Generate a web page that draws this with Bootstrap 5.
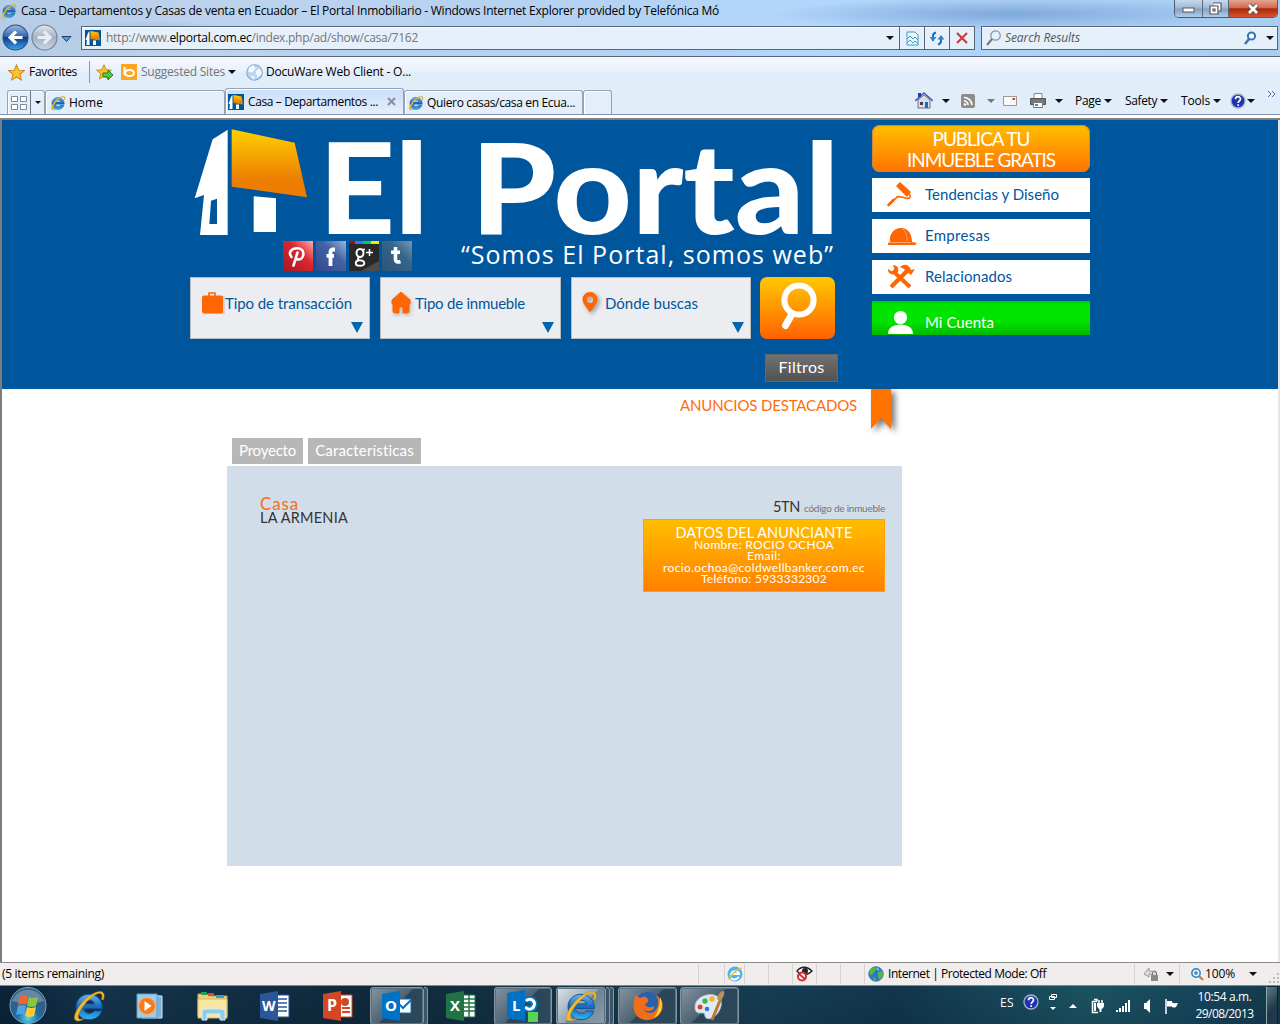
<!DOCTYPE html>
<html lang="es">
<head>
<meta charset="utf-8">
<title>Casa – Departamentos y Casas de venta en Ecuador – El Portal Inmobiliario</title>
<link href="https://cdn.jsdelivr.net/npm/bootstrap@5.3.0/dist/css/bootstrap.min.css" rel="stylesheet">
<style>
body{width:1280px;height:1024px;overflow:hidden;font:12px/16px "Open Sans","Noto Sans",sans-serif;color:#000;background:#fff}
svg{display:block;flex:none}
[data-w]{display:inline-block;white-space:nowrap}
.sl{flex:none;display:flex;align-items:center;justify-content:center}
.w14{width:14px}.w20{width:20px}.w24{width:24px}.w26{width:26px}
.car{width:0;height:0;border:4px solid transparent;border-top-color:#111;border-bottom:0;flex:none}
.glass{height:56px;background:radial-gradient(ellipse 90px 14px at 150px 34px,#a2b6d2 0,transparent 100%),radial-gradient(ellipse 240px 16px at 1010px 14px,#7fa9da 0,transparent 100%),linear-gradient(90deg,#b5cce6 0,#bdd2ec 16%,#b4d2f3 45%,#b2d6fc 65%,#a8cdf3 100%)}
.ttl{height:22px;padding-left:1px}
.winbtns{width:104px;height:18px;border:1px solid #4b5b70;border-top:0;border-radius:0 0 5px 5px;overflow:hidden;margin-right:2px}
.winbtns div{background:linear-gradient(#c8d9ec,#9fb8d3 48%,#84a1c0 52%,#b4cde6);border-right:1px solid #5a6a7f}
.winbtns .cls{background:linear-gradient(#e5a591,#cf6a50 46%,#ad2508 52%,#d5552e);border:0}
.navr{height:34px;padding-left:2px;padding-top:4px}
.orb{width:27px;height:27px;margin-top:-2px}
.fld{height:24px;background:#e6f0fa;border:1px solid #55667c;box-shadow:inset 0 1px #fff}
.fld .cell{width:25px;height:22px;border-left:1px solid #55667c}
.gry{color:#757575}
.favs{height:33px;border-top:1px solid #58667a;background:linear-gradient(#f5f8fe,#eaf1fb 14px,#e1edf9 15px);padding:0 0 2px 8px}
.tabsr{height:26px;background:#e1edf9;border-bottom:1px solid #8795a6;padding-left:7px}
.tb{height:24px;border:1px solid #96a3b3;border-bottom:0;border-radius:3px 3px 0 0;background:#e3eefa;box-shadow:inset 1px 1px #fff}
.tb.on{height:26px;background:linear-gradient(#c8defa,#e6effa)}
.edge{height:5px;background:linear-gradient(#fff 3px,#8c8c8c 3px,#777)}
.view{height:842px;border-left:2px solid #7d7d7d;border-right:2px solid #e6e6e6;background:#fff;font-family:Lato,"Open Sans",sans-serif}
.hero{height:269px;background:#00569d;padding-left:188px}
.maincol{width:650px}
.soc{width:30px;height:30px;margin-right:3px}
.tagl{font:400 25px/26px "Open Sans",Lato,sans-serif;color:#fff}
.sel{width:181px;height:62px;background:#ecedf0;border:1px solid #b9bbbf;color:#00569d;font-size:15px;padding:0 0 9px 10px}
.sel span{margin-top:-2px}
.sel .car{border-width:11px 6.5px 0;border-top-color:#0066ae;right:6px;bottom:5px}
.go{width:75px;height:62px;border-radius:7px;background:linear-gradient(#ffc800,#ff9600 50%,#ff6100)}
.filt{width:73px;height:28px;border:1px solid #666;background:linear-gradient(#727272,#515151);color:#fff;font-size:16px;margin-top:15px;margin-left:575px;padding-bottom:2px}
.side{width:218px;margin-left:32px;padding-top:5px}
.pub{height:47px;border-radius:8px;background:linear-gradient(#ffbe00,#ff7300);box-shadow:inset 0 0 0 1px #c98a3c;color:#fff;font-size:19px;line-height:21px;margin-bottom:6px;padding-top:3px}
.lnk{height:34px;background:#fff;color:#00569d;font-size:15px;margin-bottom:7px;padding-left:12px}
.lnk svg{margin-right:7px}
.lnk span{margin-top:-2px}
.lnk.me{background:linear-gradient(#00c400,#00e400 3px,#00e400 60%,#00b800);color:#fff}
.orange{color:#ff6c0a}
.dest{height:49px;padding-left:678px}
.ptab{background:#b7b7b7;color:#fff;font-size:15px;height:26px;padding-bottom:2px}
.pane{width:675px;height:400px;margin-left:225px;margin-top:2px;background:#d2ddea;padding:31px 17px 0 33px}
.adv{width:242px;height:73px;border:1px solid #ffa000;background:linear-gradient(#ffbe00,#ff8000);color:#fff;font-size:12px;line-height:11.4px;padding-top:6px}
.stat{height:23px;border-top:1px solid #8a8a8a;background:#f0edec}
.stat .cell{height:20px;border-left:1px solid #d6d3d2;flex:none}
.task{height:40px;border-top:1px solid #7a8b95;background:linear-gradient(transparent,rgba(0,20,40,.15)),linear-gradient(90deg,#0b2338 0,#14344b 8%,#10293c 28%,#173d52 60%,#12364c 70%,#1b5361 85%,#17455a 94%,#143a4c);color:#fff}
.app{height:38px;border:1px solid #8795a0;border-radius:3px;background:linear-gradient(135deg,#8794a0 0,#4c6272 48%,#2b4557 50%,#2c4a5c);box-shadow:inset 0 0 0 1px #5c7180}
.app.act{background:linear-gradient(135deg,#dde4ea,#93a5b2 50%,#6d8494 52%,#8ba0ae)}
.stk{width:4px;height:38px;border:1px solid #8795a0;border-left:0;border-radius:0 3px 3px 0;background:#3c5566}
</style>
<script src="https://cdn.jsdelivr.net/npm/bootstrap@5.3.0/dist/js/bootstrap.bundle.min.js"></script>
</head>
<body>
<svg width="0" height="0" class="position-absolute" aria-hidden="true">
<defs>
<linearGradient id="gOr" x2="0" y2="1"><stop stop-color="#ffd000"/><stop offset=".75" stop-color="#ec7d00"/><stop offset="1" stop-color="#ec7d00"/></linearGradient>
<linearGradient id="gBl" x2="0" y2="1"><stop stop-color="#6fb4ec"/><stop offset=".5" stop-color="#1668b8"/><stop offset="1" stop-color="#35b5f0"/></linearGradient>
<linearGradient id="gNav" x2="0" y2="1"><stop stop-color="#9dbbe6"/><stop offset=".48" stop-color="#2d62ae"/><stop offset=".5" stop-color="#0c3b8c"/><stop offset="1" stop-color="#37a5ee"/></linearGradient>
<linearGradient id="gGr" x2="0" y2="1"><stop stop-color="#dfe6ee"/><stop offset=".5" stop-color="#a3b2c4"/><stop offset="1" stop-color="#c8d6e6"/></linearGradient>
<symbol id="ie" viewBox="0 0 32 32"><path d="M28.500 18.500H11c.3 2.800 2.400 4.300 5.200 4.300 2.200 0 3.700-.9 4.700-2.200h7c-1.500 5.100-6 8.200-11.800 8.200C8.700 28.800 3.800 23.800 3.800 17 3.800 10.200 8.700 5 16 5s12.800 5.200 12.500 13.500zM11 14h10c-.4-2.200-2.300-3.500-4.900-3.500S11.600 11.800 11 14z" fill="url(#gBl)" stroke="#0f4f94" stroke-width=".9"/><path d="M29.500 10c1.500-4 .8-7-2-7.500C23.200 1.800 15.500 6 9.500 13 3.600 20 .6 27.300 3.600 29.500c1.800 1.300 4.900.4 8.400-1.900-2.800 1.100-4.900 1.200-5.700.1C4.600 25.300 8 18.700 13.200 12.800 18.600 6.800 24.800 3 27.300 4.400c1.300.8 1.400 2.900.5 5.600z" fill="#f5bd2b" stroke="#c68c12" stroke-width=".5"/></symbol>
<symbol id="port" viewBox="0 0 16 16"><path fill="#00569d" d="M0 0h16v16H0z"/><path fill="#fff" d="M4.500 1V15H1.500l.3-5H.5L3 3zM8 10.500h3V15H8z"/><path fill="url(#gOr)" d="M5.500 1l8 1.500 1.500 8-9.500-1.500z"/></symbol>
<symbol id="star" viewBox="0 0 16 16"><path d="M8 .8l2.100 5 5.300.4-4.100 3.500 1.300 5.300L8 12.200 3.400 15l1.300-5.300L.6 6.200l5.300-.4z" fill="#fcc42c" stroke="#d08a1c"/></symbol>
<symbol id="help" viewBox="0 0 16 16"><circle cx="8" cy="8" r="7" fill="#1c34b4" stroke="#a9b4c8" stroke-width="1.300"/><path d="M5.500 6.300c0-3.500 5-3.300 5-.3 0 2-2.300 1.800-2.300 4M8.200 11.300v1.700" fill="none" stroke="#fff" stroke-width="1.700"/></symbol>
<symbol id="globe" viewBox="0 0 16 16"><circle cx="8" cy="8" r="7.300" fill="#2778c8" stroke="#5b88b8"/><path d="M2 4c3-4 6-3 7-1.500L7 5 5 8 2 9zM10 6l4-1 1 4-3 5-2-3zM4 11l4 1-1 3z" fill="#55b948"/><path d="M9 2l2 1-1 2z" fill="#cfe8ff"/></symbol>
</defs></svg>

<div class="glass">
 <div class="ttl d-flex align-items-center">
  <svg width="16" height="16"><use href="#ie"/></svg><span data-w="698" class="ms-1">Casa – Departamentos y Casas de venta en Ecuador – El Portal Inmobiliario - Windows Internet Explorer provided by Telefónica Mó</span>
  <div class="winbtns ms-auto d-flex align-self-start">
   <div class="sl" style="width:28px"><svg width="14" height="8"><rect x="1" y="3" width="11" height="4" fill="#fff" stroke="#556"/></svg></div>
   <div class="sl w26"><svg width="13" height="13"><path d="M4 1h8v8h-2M1 4h8v8H1zM4 7h2v2H4z" fill="#fff" stroke="#556" stroke-width="1.200"/></svg></div>
   <div class="cls sl flex-fill"><svg width="13" height="12"><path d="M2 2l8 8m0-8l-8 8" stroke="#555" stroke-width="4.500"/><path d="M2 2l8 8m0-8l-8 8" stroke="#fff" stroke-width="2.600"/></svg></div>
  </div>
 </div>
 <div class="navr d-flex">
  <svg class="orb" viewBox="0 0 25 25"><circle cx="12.500" cy="12.500" r="11.600" fill="url(#gNav)" stroke="#334d77"/><path d="M19 12.500H8m5-5.500l-5.500 5.500 5.500 5.500" fill="none" stroke="#fff" stroke-width="3"/></svg>
  <svg class="orb" viewBox="0 0 25 25" style="margin-left:2px"><circle cx="12.500" cy="12.500" r="11.600" fill="url(#gGr)" stroke="#6f8095"/><path d="M6 12.500H17m-5-5.500l5.500 5.500-5.500 5.500" fill="none" stroke="#e8eef5" stroke-width="3"/></svg>
  <svg width="23" height="24"><path d="M4 10.500h9l-4.500 5z" fill="#5b9bd8" stroke="#173c72"/></svg>
  <div class="fld d-flex align-items-center" style="width:894px">
   <svg width="16" height="16" style="margin-left:3px"><use href="#port"/></svg>
   <span data-w="312" class="gry" style="margin-left:5px">http://www.<span class="text-black">elportal.com.ec</span>/index.php/ad/show/casa/7162</span>
   <i class="car ms-auto"></i>
   <div class="cell sl" style="margin-left:5px"><svg width="13" height="15"><path d="M1 1h8l3 3v10H1zM1 8l3-3 3 3 2-2 3 3M1 12l3-3 3 3 2-2 3 3" fill="#eef8fe" stroke="#3b9ccc"/></svg></div>
   <div class="cell sl"><svg width="16" height="15"><path d="M4 10V5c0-2 1-3 3-3.500M12 5v5c0 2-1 3-3 3.500" fill="none" stroke="#1f6db5" stroke-width="2"/><path d="M.5 6h7L4 10.500zM8.500 8.500h7L12 4z" fill="#2a86cc"/></svg></div>
   <div class="cell sl"><svg width="12" height="12"><path d="M1 1l10 10M11 1L1 11" stroke="#cf3b3b" stroke-width="2.200"/></svg></div>
  </div>
  <div class="fld d-flex align-items-center flex-fill px-1" style="margin:0 2px 0 6px">
   <svg width="16" height="16"><circle cx="9.500" cy="5.500" r="4.700" fill="#e3f2fc" stroke="#8595a5" stroke-width="1.300"/><path d="M6 9l-5 6" stroke="#777" stroke-width="2"/></svg>
   <i data-w="75" style="margin-left:3px;color:#555">Search Results</i>
   <svg width="14" height="14" class="ms-auto"><circle cx="8.500" cy="5" r="3.600" fill="#fff" stroke="#2f74b8" stroke-width="2"/><path d="M6 8l-4 5" stroke="#2f74b8" stroke-width="2.400"/></svg><i class="car" style="margin-left:9px;margin-right:-1px"></i>
  </div>
 </div>
</div>

<div class="favs d-flex align-items-center">
 <svg width="17" height="17"><use href="#star"/></svg><span data-w="48" style="margin-left:4px">Favorites</span>
 <svg width="19" height="22"><path d="M12.500 0v22" stroke="#8e99a6"/></svg>
 <svg width="18" height="17"><use href="#star" width="16" height="16"/><path d="M7 9h5V6l5 5-5 5v-3H7z" fill="#58c843" stroke="#23851b"/></svg>
 <svg width="16" height="16" style="margin-left:7px"><path fill="#fba61c" d="M0 0h16v16H0z"/><path d="M3.500 3v8" stroke="#fff" stroke-width="2"/><ellipse cx="8.500" cy="9" rx="4.500" ry="3" fill="none" stroke="#fff" stroke-width="2"/></svg>
 <span data-w="84" class="gry" style="margin-left:4px">Suggested Sites</span><i class="car" style="margin-left:3px"></i>
 <svg width="17" height="17" viewBox="0 0 16 16" style="margin-left:10px"><circle cx="8" cy="8" r="7.300" fill="#bcd5f1" stroke="#7fa6d4"/><path d="M3 3l4-2 2 3-3 4-4-1zM9 7l4-3 2 5-4 4zM4 11l4 1-1 3z" fill="#f4f9ff"/></svg>
 <span data-w="145" style="margin-left:3px">DocuWare Web Client - O...</span>
</div>
<div class="tabsr d-flex align-items-end">
 <div class="tb d-flex" style="width:38px"><div class="sl" style="width:22px"><svg width="16" height="14"><path d="M.5.5h6v5h-6zM9.500.5h6v5h-6zM.5 8.500h6v5h-6zM9.500 8.500h6v5h-6z" fill="#fff" stroke="#7c879b"/></svg></div><div class="sl border-start border-secondary w14"><i class="car" style="border-width:3px 3px 0"></i></div></div>
 <div class="tb d-flex align-items-center ps-1" style="width:180px"><svg width="16" height="16"><use href="#ie"/></svg><span data-w="34" style="margin-left:3px">Home</span></div>
 <div class="tb on d-flex align-items-center" style="width:179px;padding-left:2px"><svg width="16" height="16"><use href="#port"/></svg><span data-w="130" class="ms-1">Casa – Departamentos ...</span><svg width="9" height="9" style="margin-left:9px"><path d="M1 1l7 7m0-7L1 8" stroke="#8b8f97" stroke-width="2"/></svg></div>
 <div class="tb d-flex align-items-center" style="width:179px;padding-left:3px"><svg width="16" height="16"><use href="#ie"/></svg><span data-w="148" style="margin-left:3px">Quiero casas/casa en Ecua...</span></div>
 <div class="tb" style="width:29px"></div>
 <div class="d-flex align-items-center align-self-start flex-fill" style="height:23px;padding-left:303px">
  <svg width="18" height="18"><path d="M3 8v8h12V8L9 3z" fill="#d9dfe8" stroke="#66708a"/><path d="M0 9l9-8 9 8" fill="none" stroke="#4659b5" stroke-width="1.500"/><path d="M3 1h3v4H3z" fill="#2339a8"/><path d="M10 10h3v6h-3z" fill="#2668b8"/><path d="M5 10h3v3H5z" fill="#444"/></svg>
  <i class="car" style="margin-left:9px"></i>
  <svg width="14" height="14" style="margin-left:11px"><rect width="14" height="14" rx="2" fill="#8d8d8d"/><path d="M3 7a4 4 0 014 4M3 3.500a8 8 0 018 7.500" fill="none" stroke="#fff" stroke-width="1.600"/><circle cx="4" cy="10.500" r="1.300" fill="#fff"/></svg>
  <i class="car" style="margin-left:12px;border-top-color:#777"></i>
  <svg width="14" height="10" style="margin-left:8px"><path d="M.5.5h13v9H.5z" fill="#fafafa" stroke="#999"/><path d="M9.500 2h2.500v2H9.500z" fill="#d33"/></svg>
  <svg width="16" height="15" style="margin-left:13px"><path d="M4 .5h8V6H4z" fill="#fff" stroke="#888"/><path d="M.5 5.500h15v6H.5z" fill="#777" stroke="#555"/><path d="M3.500 9.500h9v5h-9z" fill="#fff" stroke="#777"/><path d="M5 11h3v2H5z" fill="#3a8fd0"/></svg>
  <i class="car" style="margin-left:9px"></i>
  <span data-w="26" style="margin-left:12px">Page</span><i class="car" style="margin-left:3px"></i>
  <span data-w="32" style="margin-left:13px">Safety</span><i class="car" style="margin-left:3px"></i>
  <span data-w="29" style="margin-left:13px">Tools</span><i class="car" style="margin-left:3px"></i>
  <svg width="16" height="16" style="margin-left:9px"><use href="#help"/></svg><i class="car" style="margin-left:1px"></i>
  <svg width="9" height="8" style="margin:-14px 0 0 12px"><path d="M1 1l3 3-3 3M5 1l3 3-3 3" fill="none" stroke="#5a6ab0"/></svg>
 </div>
</div>
<div class="edge"></div>

<div class="view">
 <div class="hero d-flex">
  <div class="maincol">
   <svg width="650" height="121" class="overflow-visible"><g transform="translate(-10 -2) scale(.33333)" fill="#fff">
    <path fill-rule="evenodd" d="M142 36L98 64 44 241l28-10-12 120h83V36zM93 248l18-6v76H88z"/>
    <path d="M155 34l189 40 37 164-226-32z" fill="url(#gOr)"/><path d="M221 235l67 6v101h-67z"/>
    <g font-family="Lato, sans-serif" font-weight="900" font-size="380"><text x="416" y="348" textLength="330" lengthAdjust="spacingAndGlyphs">El</text><text x="872" y="348" textLength="1106" lengthAdjust="spacingAndGlyphs">Portal</text></g>
   </g></svg>
   <div class="d-flex" style="padding-left:93px">
    <svg class="soc" viewBox="0 0 30 30"><defs><linearGradient id="pi" x1="0" y1="1" x2="1" y2="0"><stop stop-color="#a51822"/><stop offset=".6" stop-color="#df2630"/><stop offset="1" stop-color="#f8b0aa"/></linearGradient></defs><path fill="url(#pi)" d="M0 0h30v30H0z"/><path d="M8.500 16C4.500 11 9 7.200 14 7.200c9 0 7.500 11.300 1.500 11.300-2 0-2.500-1.500-2.500-1.500M14.500 11.500l-4 13" fill="none" stroke="#fff" stroke-width="2.600" stroke-linecap="round"/></svg>
    <svg class="soc" viewBox="0 0 30 30"><defs><linearGradient id="fb" x1="0" y1="1" x2="1" y2="0"><stop stop-color="#32498c"/><stop offset=".6" stop-color="#4363a5"/><stop offset="1" stop-color="#9bb4dc"/></linearGradient></defs><path fill="url(#fb)" d="M0 0h30v30H0z"/><path d="M19 8.500h-2c-2 0-2.500 1-2.500 3V25M10.500 14.800H18" fill="none" stroke="#fff" stroke-width="3.800"/></svg>
    <svg class="soc" viewBox="0 0 30 30"><path fill="#292929" d="M0 0h30v30H0z"/><path d="M30 0v20L12 30h18z" fill="#4c4c4c"/><path fill="#c00000" d="M0 0h6v3H0z"/><path fill="#2b7de0" d="M6 0h8v3H6z"/><path fill="#0fce37" d="M14 0h8v3h-8z"/><path fill="#ffe600" d="M22 0h8v3h-8z"/><g fill="none" stroke="#fff"><ellipse cx="11" cy="12" rx="3.500" ry="4" stroke-width="2"/><path d="M12 8.500h4" stroke-width="1.600"/><path d="M10 16c-2 2-1 3 1 3.300 6 .5 5.500 5.500 0 5.500-6 0-5-5-1-5.500" stroke-width="1.900"/><path d="M17 11.500h7m-3.500-3.500v7" stroke-width="1.500"/></g></svg>
    <svg class="soc" viewBox="0 0 30 30"><defs><linearGradient id="tu" x1="0" y1="1" x2="1" y2="0"><stop stop-color="#2b5579"/><stop offset=".6" stop-color="#356588"/><stop offset="1" stop-color="#7798b0"/></linearGradient></defs><path fill="url(#tu)" d="M0 0h30v30H0z"/><path d="M13.500 6v12.500c0 2.500 2 3 5 2M9 11.200h9" fill="none" stroke="#fff" stroke-width="3.600"/></svg>
    <span data-w="373" class="tagl" style="margin-left:46px">“Somos El Portal, somos web”</span>
   </div>
   <div class="d-flex" style="margin-top:6px">
    <div class="sel position-relative d-flex align-items-center" style="width:180px"><svg width="24" height="26"><path d="M4 5v18h20V5z" fill="#d4d4d8"/><path d="M8 6V2h6v4" fill="none" stroke="#ff6500" stroke-width="1.600"/><rect x="1" y="4.500" width="21" height="18" rx="2" fill="#ff6500"/></svg><span data-w="127">Tipo de transacción</span><i class="car position-absolute"></i></div>
    <div class="sel position-relative d-flex align-items-center" style="margin-left:10px"><svg width="24" height="26"><path d="M10 1L1 9v4h1v7q0 2 2 2h4v-6h4v6h4q2 0 2-2v-7h1V9z" fill="#ff6500" stroke="#ff6500" stroke-linejoin="round" style="filter:drop-shadow(1px 2px 2px #bbb)"/></svg><span data-w="110">Tipo de inmueble</span><i class="car position-absolute"></i></div>
    <div class="sel position-relative d-flex align-items-center" style="width:180px;margin-left:10px"><svg width="23" height="26"><path fill-rule="evenodd" d="M8 1a7.300 7.300 0 017.500 7.500c0 4-4.500 8-7.500 13C5 16.500.5 12.500.5 8.500A7.300 7.300 0 018 1zM8 5.500a3.200 3.200 0 100 6.400A3.200 3.200 0 008 5.500z" fill="#ff6500" style="filter:drop-shadow(2px 2px 2px #999)"/></svg><span data-w="93">Dónde buscas</span><i class="car position-absolute"></i></div>
    <div class="go" style="margin-left:9px"><svg width="75" height="62"><circle cx="39" cy="23" r="14.600" fill="none" stroke="#fff" stroke-width="6"/><path d="M31.500 38l-6 10.500" stroke="#fff" stroke-width="7" stroke-linecap="round"/></svg></div>
   </div>
   <div class="filt sl"><span data-w="46">Filtros</span></div>
  </div>
  <div class="side">
   <div class="pub text-center"><span data-w="97">PUBLICA TU</span><br><span data-w="148">INMUEBLE GRATIS</span></div>
   <div class="lnk d-flex align-items-center"><svg width="34" height="28"><path d="M12 5l4-4 11 10-4 5z" fill="#ff6500"/><path d="M25 13c3 4 0 5-4 4s-8-3-9 0l-6 6" fill="none" stroke="#ff6500" stroke-width="1.600"/><path d="M9.500 19l-5 5" stroke="#ff6500" stroke-width="2.600" stroke-linecap="round"/></svg><span data-w="134">Tendencias y Diseño</span></div>
   <div class="lnk d-flex align-items-center"><svg width="34" height="28"><path d="M6 20c-1-8 4-14 11-14s11 6 11 14l5 1-2 2H4v-2z" fill="#ff6500"/><path d="M5 20.500h22M23 19c0-6-1-9-4-12" fill="none" stroke="#ffa265"/></svg><span data-w="65">Empresas</span></div>
   <div class="lnk d-flex align-items-center"><svg width="34" height="28"><path d="M9 8l17 16" stroke="#ff6500" stroke-width="4"/><path d="M7 24L23 8" stroke="#ff6500" stroke-width="4.200"/><path d="M4 6l4 2.500L10.500 6 9 2c5 0 6 4 5 7L9 11.500C5 11 4 9 4 6zM16 4c5-4 8-2 10 1l1 2 4-1-4 6-4-3-3-3z" fill="#ff6500"/></svg><span data-w="87">Relacionados</span></div>
   <div class="lnk me d-flex align-items-end"><svg width="34" height="28"><circle cx="16.500" cy="10.500" r="6.600" fill="#fff"/><path d="M4 27c0-6 5-9.500 12.500-9.500S29 21 29 27z" fill="#fff"/></svg><span data-w="69" style="margin-bottom:5px">Mi Cuenta</span></div>
  </div>
 </div>
 <div class="dest d-flex"><span data-w="177" class="orange" style="font-size:15px;margin-top:8px">ANUNCIOS DESTACADOS</span><svg width="36" height="49" style="margin-left:13px"><path d="M1 0h20v40L11 29 1 40z" fill="#ff7300" style="filter:drop-shadow(4px 3px 3px #777)"/></svg></div>
 <div class="d-flex" style="padding-left:230px"><div class="ptab sl" style="width:71px"><span data-w="57">Proyecto</span></div><div class="ptab sl" style="width:113px;margin-left:5px"><span data-w="99">Características</span></div></div>
 <div class="pane d-flex justify-content-between align-items-start">
  <div class="d-flex flex-column align-items-start" style="line-height:14px"><span data-w="39" class="orange" style="font-size:17px">Casa</span><span data-w="88" style="font-size:14.500px;color:#333">LA ARMENIA</span></div>
  <div class="text-end" style="margin-top:2px"><div class="d-flex align-items-baseline justify-content-end" style="height:20px"><span data-w="27" style="font-size:14.500px;color:#333">5TN</span><span data-w="81" class="ms-1 gry" style="font-size:10px">código de inmueble</span></div>
  <div class="adv d-flex flex-column align-items-center"><span data-w="177" style="font-size:14.500px;line-height:13px">DATOS DEL ANUNCIANTE</span><span data-w="140">Nombre: ROCIO OCHOA</span><span data-w="34">Email:</span><span data-w="202">rocio.ochoa@coldwellbanker.com.ec</span><span data-w="126">Teléfono: 5933332302</span></div></div>
 </div>
</div>

<div class="stat d-flex align-items-center">
 <span data-w="102" style="margin-left:2px">(5 items remaining)</span>
 <div class="cell ms-auto w26"></div><div class="cell sl w20"><svg width="16" height="16"><circle cx="8" cy="8" r="7.500" fill="#52b2eb"/><path d="M4 10c0-6 8-6 8-2H5M4 12c3 3 6 1 8-1" stroke="#fff" stroke-width="2" fill="none"/><path d="M1 13C5 8 10 3 15 2" stroke="#f2c12e" stroke-width="1.600" fill="none"/></svg></div><div class="cell w24"></div><div class="cell w24"></div>
 <div class="cell sl w24"><svg width="17" height="16"><path d="M1 5c4-5 10-5 15 0-5 5-11 5-15 0z" fill="#fff" stroke="#222" stroke-width="1.300"/><circle cx="9" cy="5" r="3" fill="#222"/><circle cx="6" cy="10.500" r="4" fill="#fff" stroke="#d32f2f" stroke-width="2"/><path d="M3 8l6 5" stroke="#d32f2f" stroke-width="2"/></svg></div>
 <div class="cell w24"></div><div class="cell w24"></div>
 <div class="cell d-flex align-items-center" style="width:270px;padding-left:3px"><svg width="16" height="16"><use href="#globe"/></svg><span data-w="158" style="margin-left:4px">Internet | Protected Mode: Off</span></div>
 <div class="cell d-flex align-items-center" style="width:45px;padding-left:8px"><svg width="17" height="16"><path d="M1 8l5-6v3c6 0 8 2 8 5h-3c0-1-2-2-5-2v3z" fill="#ddd" stroke="#999"/><path d="M8 9h7v6H8z" fill="#888"/><path d="M9.500 9V7a2 2 0 014 0v2" fill="none" stroke="#777"/></svg><i class="car" style="margin-left:6px"></i></div>
 <div class="cell d-flex align-items-center" style="width:101px;padding-left:11px"><svg width="13" height="13"><path d="M8 8l4 4" stroke="#b78a55" stroke-width="2.400"/><circle cx="5" cy="5" r="4.200" fill="#d8efff" stroke="#2e7ec4" stroke-width="1.400"/><path d="M3 5h4M5 3v4" stroke="#1c62a8"/></svg><span data-w="30" style="margin-left:1px">100%</span><i class="car" style="margin-left:14px"></i><svg width="12" height="12" style="margin:8px 0 0 11px"><path d="M9 1h2v2H9zM9 5h2v2H9zM5 5h2v2H5zM9 9h2v2H9zM5 9h2v2H5zM1 9h2v2H1z" fill="#bbb"/></svg></div>
</div>

<div class="task d-flex align-items-center">
 <div class="sl" style="width:55px"><svg width="40" height="38" viewBox="0 0 40 38"><defs><radialGradient id="so" cy=".85"><stop stop-color="#50d5f5"/><stop offset=".6" stop-color="#1c6ea5"/><stop offset="1" stop-color="#315f86"/></radialGradient></defs><circle cx="20" cy="18.500" r="18" fill="url(#so)" stroke="#7da5bd"/><path d="M4 14a17 17 0 0132 0q-16 5-32 0z" fill="#fff" opacity=".25"/><path d="M12 9q4-2 8 0l-2 9q-4-2-8 0z" fill="#f0652f"/><path d="M21 10q4 2 9 0l-2 9q-5 2-9 0z" fill="#8cc63e"/><path d="M10 19q4-2 8 0l-2 9q-4-2-8 0z" fill="#4aa5e8"/><path d="M19 20q4 2 9 0l-2 9q-5 2-9 0z" fill="#fdcb3a"/></svg></div>
 <div class="sl" style="width:68px"><svg width="34" height="34"><use href="#ie"/></svg></div>
 <div class="sl" style="width:54px"><svg width="28" height="28"><path d="M6 3l20 1v22L6 26z" fill="#7fb3d8" stroke="#d3e8f5"/><path d="M1 2h20v24H1z" fill="#9ecbe6" stroke="#5b9fce"/><circle cx="11" cy="14" r="8.500" fill="#f47b20" stroke="#ffb27a"/><path d="M8.500 9l7 5-7 5z" fill="#fff"/></svg></div>
 <div class="sl" style="width:72px"><svg width="34" height="32"><path d="M2 4h9l2 2h18v20H2z" fill="#ecd078" stroke="#c9a850"/><path d="M5 2h6v3H5z" fill="#21a04a"/><path d="M12 3h6v3h-6z" fill="#d84b35"/><path d="M20 5h8v3h-8z" fill="#3a96dd"/><path d="M2 9h29v19H2z" fill="#f7e5a2" stroke="#d5b764"/><path d="M6 30v-8q0-3 3-3h17q3 0 3 3v8h-5v-6H11v6z" fill="#8fcbea" stroke="#d4effc"/></svg></div>
 <div class="sl" style="width:52px"><svg width="30" height="30"><path d="M17 4h12v22H17z" fill="#fff" stroke="#2b579a"/><path d="M18 8h9m-9 4h9m-9 4h9m-9 4h9" stroke="#2b579a" stroke-width="1.500"/><path d="M0 3l18-3v30L0 27z" fill="#2b579a"/><text x="2" y="20" font-size="14" font-weight="700" fill="#fff">W</text></svg></div>
 <div class="sl" style="width:69px;padding-left:4px"><svg width="30" height="30"><path d="M17 4h12v22H17z" fill="#fff" stroke="#d24726"/><path d="M19 17h8m-8 4h8" stroke="#d24726" stroke-width="2"/><circle cx="22" cy="11" r="4" fill="#d24726"/><path d="M0 3l18-3v30L0 27z" fill="#d24726"/><text x="4" y="20" font-size="16" font-weight="700" fill="#fff">P</text></svg></div>
 <div class="app sl" style="width:54px"><svg width="30" height="30"><path d="M15 8h14v14H15z" fill="#fff" stroke="#0072c6"/><path d="M16 12l5 5 8-8" fill="none" stroke="#0072c6" stroke-width="2"/><path d="M0 3l18-3v30L0 27z" fill="#0072c6"/><text x="3" y="20" font-size="15" font-weight="700" fill="#fff">O</text></svg></div><div class="stk"></div>
 <div class="sl" style="width:66px"><svg width="30" height="30"><path d="M17 4h12v22H17z" fill="#fff" stroke="#217346"/><path d="M18 8h11m-11 4h11m-11 4h11m-11 4h11M23 4v22" stroke="#217346" stroke-width="1.500"/><path d="M0 3l18-3v30L0 27z" fill="#217346"/><text x="4" y="20" font-size="15" font-weight="700" fill="#fff">X</text></svg></div>
 <div class="app sl" style="width:58px"><svg width="32" height="32"><path d="M19 11c4-4 10 0 8 5-2 4-6 4-9 1" fill="none" stroke="#0072c6" stroke-width="7"/><path d="M19 11c4-4 10 0 8 5-2 4-6 4-9 1" fill="none" stroke="#fff" stroke-width="3"/><path d="M0 3l18-3v31L0 28z" fill="#0072c6"/><text x="5" y="21" font-size="15" font-weight="700" fill="#fff">L</text><path d="M21 22h10v10H21z" fill="#5bd352"/></svg></div>
 <div class="app act sl" style="width:50px;margin-left:4px"><svg width="34" height="34"><use href="#ie"/></svg></div><div class="stk"></div><div class="stk"></div>
 <div class="app sl" style="width:59px;margin-left:4px"><svg width="32" height="32" viewBox="0 0 32 32"><circle cx="16" cy="16" r="14" fill="#2860ac"/><path d="M4 5l4 3c5-3 9 0 8 4l-3 2c1 4 6 4 9 2 1 6-9 7-10 2 0 6 12 8 14-3 1-5-1-8-3-10 7 3 9 9 7 15C25 33 5 34 2 20 1 14 2 9 4 5z" fill="#ee6e1b"/><path d="M28 7c4 8 2 17-6 21 3-4 6-11 6-21z" fill="#ffd23e"/></svg></div>
 <div class="app sl" style="width:59px;margin-left:3px"><svg width="34" height="32"><path d="M2 18C1 9 12 3 21 5c8 2 9 9 5 16-4 8-13 10-14 5 0-4-3-3-6-3-2 0-4-2-4-5z" fill="#dcebf6" stroke="#a9c4da"/><circle cx="7" cy="17" r="2.500" fill="#e23d30"/><circle cx="12" cy="11" r="2.700" fill="#43b649"/><circle cx="19" cy="9" r="2.800" fill="#f8b52c"/><circle cx="14" cy="19" r="2.300" fill="#3f6fd0"/><path d="M28 8l-9 22" stroke="#c07830" stroke-width="3"/><path d="M24 9c1-5 3-8 7-8 1 4-1 7-4 10z" fill="#b3925e"/></svg></div>
 <div class="ms-auto d-flex align-items-center">
  <span data-w="14" style="margin-bottom:6px">ES</span>
  <svg width="16" height="16" style="margin:-8px 0 0 9px"><use href="#help"/></svg>
  <svg width="12" height="20" style="margin:-7px 0 0 9px"><path d="M3.500 2.500h5v3h-5zM1.500 4.500h5v3h-5z" fill="#244" stroke="#fff"/><path d="M2 15h6l-3 3z" fill="#fff"/></svg>
  <svg width="10" height="6" style="margin-left:8px"><path d="M1 5h8L5 1z" fill="#fff"/></svg>
  <svg width="14" height="16" style="margin-left:13px"><path d="M7 14.500H1.500v-11H6M3 1.500h3v2" fill="none" stroke="#fff" stroke-width="1.500"/><path d="M3 5h2v8H3z" fill="#fff"/><path d="M6 5h7v3q-.5 2.500-2.500 3v3h-2v-3Q6.500 10.500 6 8z" fill="#fff"/><path d="M8 2v3m3-3v3" stroke="#fff" stroke-width="1.500"/></svg>
  <svg width="16" height="14" style="margin-left:10px"><path d="M1 11h2v2H1zM4 9h2v4H4zM7 7h2v6H7zM10 4h2v9h-2zM13 1h2v12h-2z" fill="#fff"/></svg>
  <svg width="14" height="16" style="margin-left:11px"><path d="M2 5h2l4-4v14l-4-4H2z" fill="#fff"/></svg>
  <svg width="16" height="16" style="margin-left:8px"><path d="M2 1v15" stroke="#fff" stroke-width="1.500"/><path d="M3 3h5v1.500c2 1 4 .5 6 .5l-2 4c-2 1-4 .5-4-.5H3z" fill="#fff"/></svg>
  <div class="text-center" style="width:86px;line-height:17px;padding-left:3px;margin-top:-2px"><span data-w="54">10:54 a.m.</span><br><span data-w="58">29/08/2013</span></div>
  <div style="width:12px;height:39px;background:linear-gradient(135deg,#5e7885,#20394a 60%);border:1px solid #0b2432;border-left-color:#8aa;margin-right:2px"></div>
 </div>
</div>
<script>
// Spread each label over its declared width by adjusting the tracking.
document.querySelectorAll('[data-w]').forEach(function(e){
  var n=e.textContent.length, w=+e.dataset.w, m=e.getBoundingClientRect().width;
  e.style.letterSpacing=((w-m)/n).toFixed(3)+'px';
});
</script>
</body>
</html>
